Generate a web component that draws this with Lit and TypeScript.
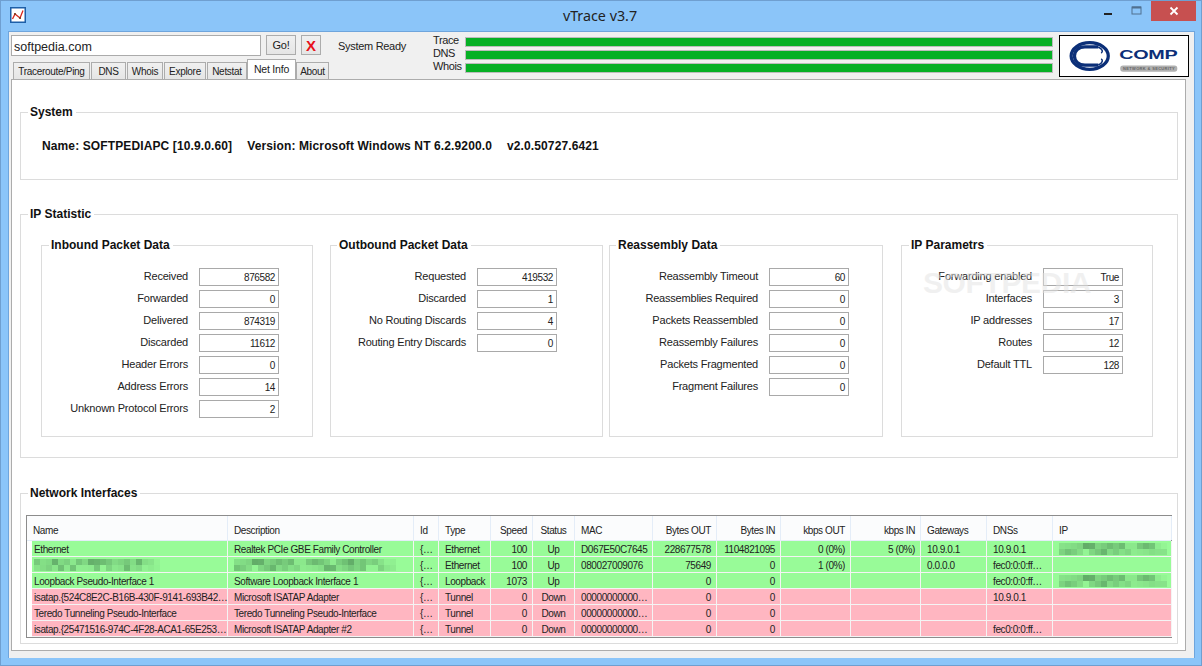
import { LitElement, html, css, svg } from "lit";
import { customElement } from "lit/decorators.js";

interface StatBox {
  title: string;
  labelWidth: number;
  rows: [string, string][];
}

const BOXES: StatBox[] = [
  {
    title: "Inbound Packet Data",
    labelWidth: 146,
    rows: [
      ["Received", "876582"],
      ["Forwarded", "0"],
      ["Delivered", "874319"],
      ["Discarded", "11612"],
      ["Header Errors", "0"],
      ["Address Errors", "14"],
      ["Unknown Protocol Errors", "2"],
    ],
  },
  {
    title: "Outbound Packet Data",
    labelWidth: 135,
    rows: [
      ["Requested", "419532"],
      ["Discarded", "1"],
      ["No Routing Discards", "4"],
      ["Routing Entry Discards", "0"],
    ],
  },
  {
    title: "Reassembly Data",
    labelWidth: 148,
    rows: [
      ["Reassembly Timeout", "60"],
      ["Reassemblies Required", "0"],
      ["Packets Reassembled", "0"],
      ["Reassembly Failures", "0"],
      ["Packets Fragmented", "0"],
      ["Fragment Failures", "0"],
    ],
  },
  {
    title: "IP Parametrs",
    labelWidth: 130,
    rows: [
      ["Forwarding enabled", "True"],
      ["Interfaces", "3"],
      ["IP addresses", "17"],
      ["Routes", "12"],
      ["Default TTL", "128"],
    ],
  },
];

const COLUMNS = [
  "Name", "Description", "Id", "Type", "Speed", "Status", "MAC", "Bytes OUT",
  "Bytes IN", "kbps OUT", "kbps IN", "Gateways", "DNSs", "IP",
];

const TABS: [string, number][] = [
  ["Traceroute/Ping", 77],
  ["DNS", 35],
  ["Whois", 36],
  ["Explore", 42],
  ["Netstat", 40],
  ["Net Info", 49],
  ["About", 33],
];

// "~N" marks a value pixelated out in the screenshot, N is its width
const ROWS: { up: boolean; cells: string[] }[] = [
  { up: true, cells: ["Ethernet", "Realtek PCIe GBE Family Controller", "{…", "Ethernet", "100", "Up", "D067E50C7645", "228677578", "1104821095", "0 (0%)", "5 (0%)", "10.9.0.1", "10.9.0.1", "~108"] },
  { up: true, cells: ["~126", "~162", "{…", "Ethernet", "100", "Up", "080027009076", "75649", "0", "1 (0%)", "", "0.0.0.0", "fec0:0:0:ff…", ""] },
  { up: true, cells: ["Loopback Pseudo-Interface 1", "Software Loopback Interface 1", "{…", "Loopback", "1073", "Up", "", "0", "0", "", "", "", "fec0:0:0:ff…", "~108"] },
  { up: false, cells: ["isatap.{524C8E2C-B16B-430F-9141-693B42…", "Microsoft ISATAP Adapter", "{…", "Tunnel", "0", "Down", "00000000000…", "0", "0", "", "", "", "10.9.0.1", ""] },
  { up: false, cells: ["Teredo Tunneling Pseudo-Interface", "Teredo Tunneling Pseudo-Interface", "{…", "Tunnel", "0", "Down", "00000000000…", "0", "0", "", "", "", "", ""] },
  { up: false, cells: ["isatap.{25471516-974C-4F28-ACA1-65E253…", "Microsoft ISATAP Adapter #2", "{…", "Tunnel", "0", "Down", "00000000000…", "0", "0", "", "", "", "fec0:0:0:ff…", ""] },
];

const cellClass = (i: number) => {
  if (i === 0) return "cell first";
  if (i === 4 || (i >= 7 && i <= 10)) return "cell num";
  if (i === 5) return "cell mid";
  return "cell";
};

// block mosaic standing in for the censored text
const mosaic = (width: number) => {
  const blocks = [];
  let seed = width * 7 + 3;
  for (let x = 0; x < width; x += 6) {
    for (let y = 0; y < 2; y++) {
      seed = (seed * 31 + 11) % 101;
      const fade = x > width - 14 ? 0.35 : 1;
      const alpha = ((seed % 50) / 100 + (y === 0 ? 0.12 : 0.05)) * fade;
      blocks.push(svg`<rect x=${x} y=${y * 6} width="6" height="6" fill="#3f7a4a" opacity=${alpha} />`);
    }
  }
  return html`<svg class="mosaic" width=${width} height="12">${blocks}</svg>`;
};

@customElement("app-root")
export class AppRoot extends LitElement {
  static styles = css`
    :host {
      display: block;
      width: 1202px;
      height: 666px;
      overflow: hidden;
      background: #8bc5f9;
      box-sizing: border-box;
      border: 1px solid #6f9fd0;
      font-family: "Liberation Sans", Arial, sans-serif;
      font-size: 11px;
      letter-spacing: -0.2px;
      color: #1a1a1a;
    }

    .titlebar {
      height: 30px;
      display: flex;
      align-items: flex-start;
      position: relative;
    }
    .app-icon {
      margin: 6px 0 0 9px;
      width: 16px;
      height: 16px;
    }
    .title {
      position: absolute;
      left: 0;
      right: 2px;
      top: 5px;
      text-align: center;
      font-family: "Noto Sans", sans-serif;
      font-size: 14.3px;
      letter-spacing: 0;
      color: #222;
    }
    .win-btns {
      margin-left: auto;
      margin-right: 5px;
      display: flex;
      height: 20px;
    }
    .win-btn {
      width: 29px;
      display: flex;
      align-items: center;
      justify-content: center;
    }
    .win-btn.close {
      width: 45px;
      background: #c75050;
    }

    .client {
      margin: 0 6px 0 7px;
      height: 627px;
      box-sizing: border-box;
      background: #f0f0f0;
      border-top: 1px solid #6fa5dc;
      border-left: 1px solid #6fa5dc;
      border-right: 1px solid #6fa5dc;
      padding: 3px 0 0 2px;
    }

    .top {
      display: flex;
      height: 44px;
      position: relative;
      z-index: 1;
    }
    .left {
      width: 325px;
      flex: none;
    }
    .address {
      display: flex;
      height: 25px;
    }
    .url {
      width: 250px;
      height: 21px;
      box-sizing: border-box;
      border: 1px solid #ababab;
      background: #fff;
      padding: 2px 2px 0;
      font-size: 12.5px;
      letter-spacing: 0;
      line-height: 18px;
      color: #222;
    }
    .btn {
      height: 20px;
      box-sizing: border-box;
      border: 1px solid #acacac;
      background: linear-gradient(#f0f0f0, #e5e5e5);
      display: flex;
      align-items: center;
      justify-content: center;
      font-size: 11px;
    }
    .go {
      width: 30px;
      margin-left: 5px;
    }
    .stop {
      width: 20px;
      margin-left: 5px;
      color: #e8101a;
      font-weight: bold;
      font-size: 15px;
    }
    .tabs {
      display: flex;
      height: 20px;
      align-items: flex-end;
      padding-left: 2px;
      margin-top: -1px;
    }
    .tab {
      height: 17px;
      box-sizing: border-box;
      border: 1px solid #acacac;
      border-bottom: none;
      margin-right: 1px;
      background: linear-gradient(#f0f0f0, #e5e5e5);
      font-size: 10px;
      letter-spacing: -0.3px;
      line-height: 18px;
      text-align: center;
      color: #222;
    }
    .tab.active {
      height: 20px;
      background: #fff;
      line-height: 19px;
      font-size: 10.5px;
      letter-spacing: -0.2px;
      margin-left: -1px;
      margin-right: 0;
      position: relative;
    }
    .status {
      width: 95px;
      flex: none;
      padding-top: 5px;
      padding-left: 2px;
      letter-spacing: -0.3px;
      color: #222;
    }
    .bars {
      flex: none;
      width: 626px;
      display: grid;
      grid-template-columns: 32px 588px;
      grid-auto-rows: 13px;
      align-items: center;
      line-height: 11px;
      letter-spacing: -0.4px;
      color: #222;
    }
    .bars span {
      margin-top: -3px;
    }
    .bar {
      height: 10px;
      box-sizing: border-box;
      border: 1px solid #bcbcbc;
      background: #06b025;
    }
    .logo {
      width: 130px;
      height: 42px;
      flex: none;
      box-sizing: border-box;
      border: 1.5px solid #000;
      background: #fff;
      display: block;
    }

    .panel {
      width: 1175px;
      height: 572px;
      box-sizing: border-box;
      border: 1px solid #acacac;
      background: #fff;
      padding: 24px 7px 0 8px;
      position: relative;
    }
    fieldset {
      margin: 0;
      padding: 0;
      box-sizing: border-box;
      border: 1px solid #dcdcdc;
      min-width: 0;
    }
    legend {
      padding: 0 3px 0 2px;
      margin-left: 7px;
      font-weight: bold;
      font-size: 12px;
      line-height: 16px;
      letter-spacing: 0;
      color: #111;
    }
    .system {
      height: 76px;
    }
    .system-line {
      display: flex;
      gap: 15px;
      padding: 19px 0 0 21px;
      font-weight: bold;
      font-size: 12px;
      letter-spacing: 0.12px;
      color: #111;
    }
    .ip {
      height: 252px;
      margin-top: 26px;
      padding: 15px 0 0 20px;
    }
    .ip > legend {
      margin-left: -13px;
    }
    .stats {
      display: flex;
    }
    .box {
      height: 200px;
      flex: none;
      padding: 15px 0 0;
    }
    .box > legend {
      margin-left: 6px;
    }
    .box:nth-child(1) { width: 272px; }
    .box:nth-child(1) > legend { margin-left: 7px; }
    .box:nth-child(2) { width: 273px; margin-left: 17px; }
    .box:nth-child(3) { width: 274px; margin-left: 6px; }
    .box:nth-child(4) { width: 252px; margin-left: 18px; }
    .box:nth-child(4) > legend { margin-left: 7px; }
    .field {
      display: grid;
      column-gap: 11px;
      height: 18px;
      margin-bottom: 4px;
      align-items: center;
    }
    .field label {
      text-align: right;
      color: #222;
      white-space: nowrap;
      margin-top: -3px;
    }
    .field output {
      width: 80px;
      height: 18px;
      box-sizing: border-box;
      border: 1px solid #a9a9a9;
      text-align: right;
      padding: 2px 3px 0 0;
      font-size: 10px;
      letter-spacing: -0.4px;
      line-height: 14px;
      color: #222;
    }
    .net {
      height: 159px;
      margin-top: 27px;
      padding: 14px 5px 0 5px;
    }
    .net > legend {
      margin-left: 2px;
    }
    .table {
      height: 123px;
      box-sizing: border-box;
      border: 1px solid #8c8c8c;
      background: #fff;
      font-size: 10px;
      letter-spacing: -0.4px;
      color: #222;
    }
    .row {
      display: grid;
      grid-template-columns: 196px 186px 25px 52px 42px 42px 78px 64px 64px 70px 70px 66px 66px 119px;
      height: 16px;
      padding-left: 5px;
    }
    .head {
      height: 24px;
      padding-left: 0;
      grid-template-columns: 201px 186px 25px 52px 42px 42px 78px 64px 64px 70px 70px 66px 66px 119px;
      background: #fbfcfd;
      border-bottom: 1px solid #e4edf8;
    }
    .head .cell {
      border: none;
      border-right: 1px solid #e4edf8;
      line-height: 29px;
    }
    .head .cell.first {
      padding-left: 6px;
    }
    .row.up { background: linear-gradient(#fff, #fff) 0 0 / 5px 100% no-repeat, #98fb98; }
    .row.down { background: linear-gradient(#fff, #fff) 0 0 / 5px 100% no-repeat, #ffb6c1; }
    .cell {
      box-sizing: border-box;
      border-right: 1px solid #f4f4f4;
      border-bottom: 1px solid #f4f4f4;
      padding: 0 5px 0 6px;
      line-height: 18px;
      white-space: nowrap;
      overflow: hidden;
    }
    .cell.first { padding-left: 2px; }
    .cell.num { text-align: right; }
    .cell.mid { text-align: center; padding: 0; }
    .mosaic {
      display: block;
      margin-top: 2px;
    }
    .watermark {
      position: absolute;
      left: 911px;
      top: 186px;
      font-size: 30px;
      font-weight: bold;
      letter-spacing: -0.4px;
      color: rgba(226, 226, 226, 0.5);
      pointer-events: none;
    }
  `;

  private renderBox(box: StatBox) {
    return html`
      <fieldset class="box">
        <legend>${box.title}</legend>
        ${box.rows.map(
          ([label, value]) => html`
            <div class="field" style="grid-template-columns: ${box.labelWidth}px 80px">
              <label>${label}</label>
              <output>${value}</output>
            </div>
          `
        )}
      </fieldset>
    `;
  }

  private renderCell(text: string, i: number) {
    return html`<div class=${cellClass(i)}>
      ${text.startsWith("~") ? mosaic(Number(text.slice(1))) : text}
    </div>`;
  }

  render() {
    return html`
      <div class="titlebar">
        <svg class="app-icon" viewBox="0 0 16 16">
          <rect x="0.75" y="0.75" width="14.5" height="14.5" fill="#fff" stroke="#1d5fa8" stroke-width="1.5" />
          <path d="M2.5 12 L5 7 L10 11 L13 3.5" fill="none" stroke="#d8261c" stroke-width="1.3" />
          <circle cx="5" cy="7" r="1.1" fill="#7a3a1c" />
          <circle cx="10" cy="11" r="1.1" fill="#7a3a1c" />
        </svg>
        <div class="title">vTrace v3.7</div>
        <div class="win-btns">
          <div class="win-btn">
            <svg width="10" height="10" viewBox="0 0 10 10"><rect x="1" y="7" width="8" height="2" fill="#222" /></svg>
          </div>
          <div class="win-btn">
            <svg width="12" height="10" viewBox="0 0 12 10">
              <rect x="1" y="1" width="9" height="7" fill="none" stroke="#50708f" />
              <rect x="1" y="0.5" width="9" height="2" fill="#50708f" />
            </svg>
          </div>
          <div class="win-btn close">
            <svg width="10" height="10" viewBox="0 0 10 10">
              <path d="M1.5 1.5 L8.5 8.5 M8.5 1.5 L1.5 8.5" stroke="#fff" stroke-width="1.8" />
            </svg>
          </div>
        </div>
      </div>

      <div class="client">
        <div class="top">
          <div class="left">
            <div class="address">
              <div class="url">softpedia.com</div>
              <div class="btn go">Go!</div>
              <div class="btn stop">X</div>
            </div>
            <div class="tabs">
              ${TABS.map(([t, w]) => html`
                <div class="tab ${t === "Net Info" ? "active" : ""}" style="width: ${w}px">${t}</div>
              `)}
            </div>
          </div>
          <div class="status">System Ready</div>
          <div class="bars">
            <span>Trace</span><div class="bar"></div>
            <span>DNS</span><div class="bar"></div>
            <span>Whois</span><div class="bar"></div>
          </div>
          <svg class="logo" viewBox="0 0 130 42">
            <ellipse cx="29" cy="21" rx="19.5" ry="14" fill="none" stroke="#0b2f78" stroke-width="3.4" />
            <path d="M38 11.5 H24 C17 11.5 13 16 13 21 C13 26 17 30.5 24 30.5 H38" fill="none" stroke="#0b2f78" stroke-width="3.4" />
            <path d="M38 11.5 C43 14 43 17 41 18 M38 30.5 C43 28 43 25 41 24" fill="none" stroke="#0b2f78" stroke-width="1.6" />
            <text x="60" y="24" font-family="Liberation Sans, sans-serif" font-weight="bold" font-size="12.5" textLength="61" lengthAdjust="spacingAndGlyphs" fill="#0b2f78">COMP</text>
            <rect x="61" y="31" width="60" height="6.5" rx="3" fill="#b0b0b0" />
            <text x="64" y="36" font-family="Liberation Sans, sans-serif" font-weight="bold" font-size="4.2" textLength="54" fill="#666">NETWORK &amp; SECURITY</text>
          </svg>
        </div>

        <div class="panel">
          <fieldset class="system">
            <legend>System</legend>
            <div class="system-line">
              <span>Name: SOFTPEDIAPC [10.9.0.60]</span>
              <span>Version: Microsoft Windows NT 6.2.9200.0</span>
              <span>v2.0.50727.6421</span>
            </div>
          </fieldset>

          <fieldset class="ip">
            <legend>IP Statistic</legend>
            <div class="stats">${BOXES.map((b) => this.renderBox(b))}</div>
          </fieldset>

          <fieldset class="net">
            <legend>Network Interfaces</legend>
            <div class="table">
              <div class="row head">
                ${COLUMNS.map((c, i) => html`<div class=${cellClass(i)}>${c}</div>`)}
              </div>
              ${ROWS.map(
                (r) => html`
                  <div class="row ${r.up ? "up" : "down"}">
                    ${r.cells.map((c, i) => this.renderCell(c, i))}
                  </div>
                `
              )}
            </div>
          </fieldset>
          <div class="watermark">SOFTPEDIA</div>
        </div>
      </div>
    `;
  }
}
